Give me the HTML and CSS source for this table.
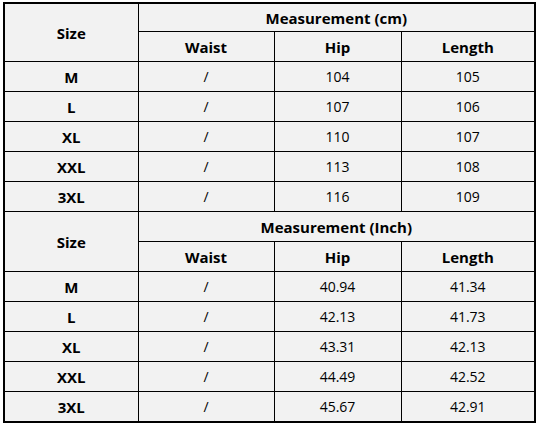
FILE: index.html
```html
<!DOCTYPE html>
<html>
<head>
<meta charset="utf-8">
<link rel="stylesheet" href="styles.css">
</head>
<body>
<table class="chart">
  <colgroup>
    <col class="c1"><col class="c2"><col class="c3"><col class="c4">
  </colgroup>
  <tbody>
    <tr class="top"><th rowspan="2">Size</th><th colspan="3">Measurement (cm)</th></tr>
    <tr><th>Waist</th><th>Hip</th><th>Length</th></tr>
    <tr><th>M</th><td>/</td><td>104</td><td>105</td></tr>
    <tr><th>L</th><td>/</td><td>107</td><td>106</td></tr>
    <tr><th>XL</th><td>/</td><td>110</td><td>107</td></tr>
    <tr><th>XXL</th><td>/</td><td>113</td><td>108</td></tr>
    <tr><th>3XL</th><td>/</td><td>116</td><td>109</td></tr>
    <tr><th rowspan="2">Size</th><th colspan="3">Measurement (Inch)</th></tr>
    <tr><th>Waist</th><th>Hip</th><th>Length</th></tr>
    <tr><th>M</th><td>/</td><td>40.94</td><td>41.34</td></tr>
    <tr><th>L</th><td>/</td><td>42.13</td><td>41.73</td></tr>
    <tr><th>XL</th><td>/</td><td>43.31</td><td>42.13</td></tr>
    <tr><th>XXL</th><td>/</td><td>44.49</td><td>42.52</td></tr>
    <tr><th>3XL</th><td>/</td><td>45.67</td><td>42.91</td></tr>
  </tbody>
</table>
</body>
</html>
```
FILE: styles.css
```css
html, body {
  margin: 0;
  background: #ffffff;
}
body {
  padding: 2px 0 0 3px;
}
.chart {
  border-collapse: collapse;
  table-layout: fixed;
  width: 533px;
  background: #f2f2f2;
  border: 2px solid #000;
  font-family: "Open Sans", "Noto Sans", sans-serif;
  color: #000;
}
.c1 { width: 134px; }
.c2 { width: 136px; }
.c3 { width: 127px; }
.c4 { width: 134px; }
.chart th, .chart td {
  border: 1px solid #000;
  height: 29px;
  padding: 0;
  text-align: center;
  vertical-align: middle;
}
.chart tr.top th {
  height: 27px;
}
.chart th {
  font-weight: 700;
  font-size: 15px;
}
.chart td {
  font-weight: 400;
  font-size: 14px;
}
```
